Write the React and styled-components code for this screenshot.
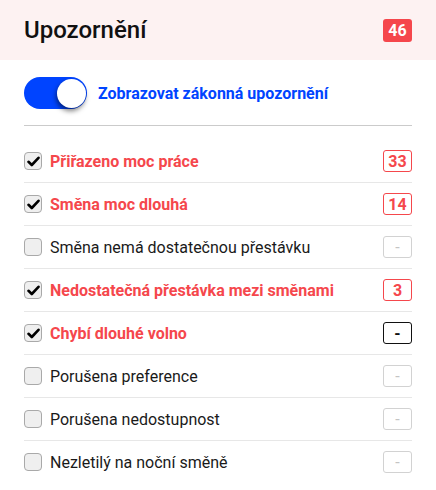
import styled, { createGlobalStyle } from "styled-components"

const Global = createGlobalStyle`
  body {
    margin: 0;
    background: #fff;
    font-family: Roboto, "Noto Sans", sans-serif;
  }
`

const Panel = styled.div`
  width: 436px;
  height: 490px;
  overflow: hidden;
`

const Header = styled.div`
  height: 60px;
  padding: 0 24px;
  background: #fdf2f2;
  display: flex;
  align-items: center;
  justify-content: space-between;
`

const Title = styled.h1`
  margin: 0;
  font-size: 24px;
  font-weight: 500;
  color: #111;
`

const TotalBadge = styled.span`
  min-width: 29px;
  height: 23px;
  box-sizing: border-box;
  border-radius: 3px;
  background: #f5474c;
  color: #fff;
  font-weight: 700;
  font-size: 16px;
  display: flex;
  align-items: center;
  justify-content: center;
`

const Body = styled.div`
  padding: 0 24px;
`

const ToggleRow = styled.div`
  display: flex;
  align-items: center;
  gap: 11px;
  padding: 17px 0 16px;
  border-bottom: 1px solid #cbcbcb;
  margin-bottom: 14px;
`

const Switch = styled.div`
  width: 63px;
  height: 32px;
  border-radius: 16px;
  background: #0044ff;
  display: flex;
  align-items: center;
  justify-content: ${p => (p.on ? "flex-end" : "flex-start")};
  padding: 0 1px;
  box-sizing: border-box;
`

const Knob = styled.div`
  width: 29px;
  height: 29px;
  border-radius: 50%;
  background: #fff;
  box-shadow: -1px 3px 5px rgba(0, 0, 0, 0.5);
`

const ToggleLabel = styled.span`
  font-size: 16px;
  font-weight: 700;
  color: #0044ff;
`

const Row = styled.div`
  height: 42px;
  display: flex;
  align-items: center;
  gap: 8px;
  border-bottom: ${p => (p.last ? "none" : "1px solid #e7e7e7")};
`

const Box = styled.div`
  width: 18px;
  height: 18px;
  box-sizing: border-box;
  border: 1px solid #a9a9a9;
  border-radius: 4px;
  background: #efefef;
  display: flex;
  align-items: center;
  justify-content: center;
  flex-shrink: 0;
`

const Label = styled.span`
  flex: 1;
  font-size: 16px;
  font-weight: ${p => (p.active ? 700 : 400)};
  color: ${p => (p.active ? "#f5474c" : "#1a1a1a")};
`

const Count = styled.span`
  width: 29px;
  height: 22px;
  box-sizing: border-box;
  border-radius: 3px;
  border: 1px solid ${p => p.tone.border};
  color: ${p => p.tone.text};
  font-size: 16px;
  font-weight: ${p => p.tone.weight};
  display: flex;
  align-items: center;
  justify-content: center;
`

const tones = {
  red: { border: "#f5474c", text: "#f5474c", weight: 700 },
  black: { border: "#111", text: "#111", weight: 700 },
  off: { border: "#d2d2d2", text: "#c4c4c4", weight: 400 },
}

const rules = [
  { name: "Přiřazeno moc práce", checked: true, count: "33", tone: "red" },
  { name: "Směna moc dlouhá", checked: true, count: "14", tone: "red" },
  { name: "Směna nemá dostatečnou přestávku", checked: false, count: "-", tone: "off" },
  { name: "Nedostatečná přestávka mezi směnami", checked: true, count: "3", tone: "red" },
  { name: "Chybí dlouhé volno", checked: true, count: "-", tone: "black" },
  { name: "Porušena preference", checked: false, count: "-", tone: "off" },
  { name: "Porušena nedostupnost", checked: false, count: "-", tone: "off" },
  { name: "Nezletilý na noční směně", checked: false, count: "-", tone: "off" },
]

const Check = () => (
  <svg width="13" height="11" viewBox="0 0 13 11">
    <path d="M1.5 5.8 L4.8 9 L11.5 1.8" fill="none" stroke="#000" strokeWidth="2.6" strokeLinecap="round" strokeLinejoin="round" />
  </svg>
)

export default function App() {
  return (
    <Panel>
      <Global />
      <Header>
        <Title>Upozornění</Title>
        <TotalBadge>46</TotalBadge>
      </Header>
      <Body>
        <ToggleRow>
          <Switch on>
            <Knob />
          </Switch>
          <ToggleLabel>Zobrazovat zákonná upozornění</ToggleLabel>
        </ToggleRow>
        {rules.map((r, i) => (
          <Row key={r.name} last={i === rules.length - 1}>
            <Box>{r.checked && <Check />}</Box>
            <Label active={r.tone !== "off"}>{r.name}</Label>
            <Count tone={tones[r.tone]}>{r.count}</Count>
          </Row>
        ))}
      </Body>
    </Panel>
  )
}
